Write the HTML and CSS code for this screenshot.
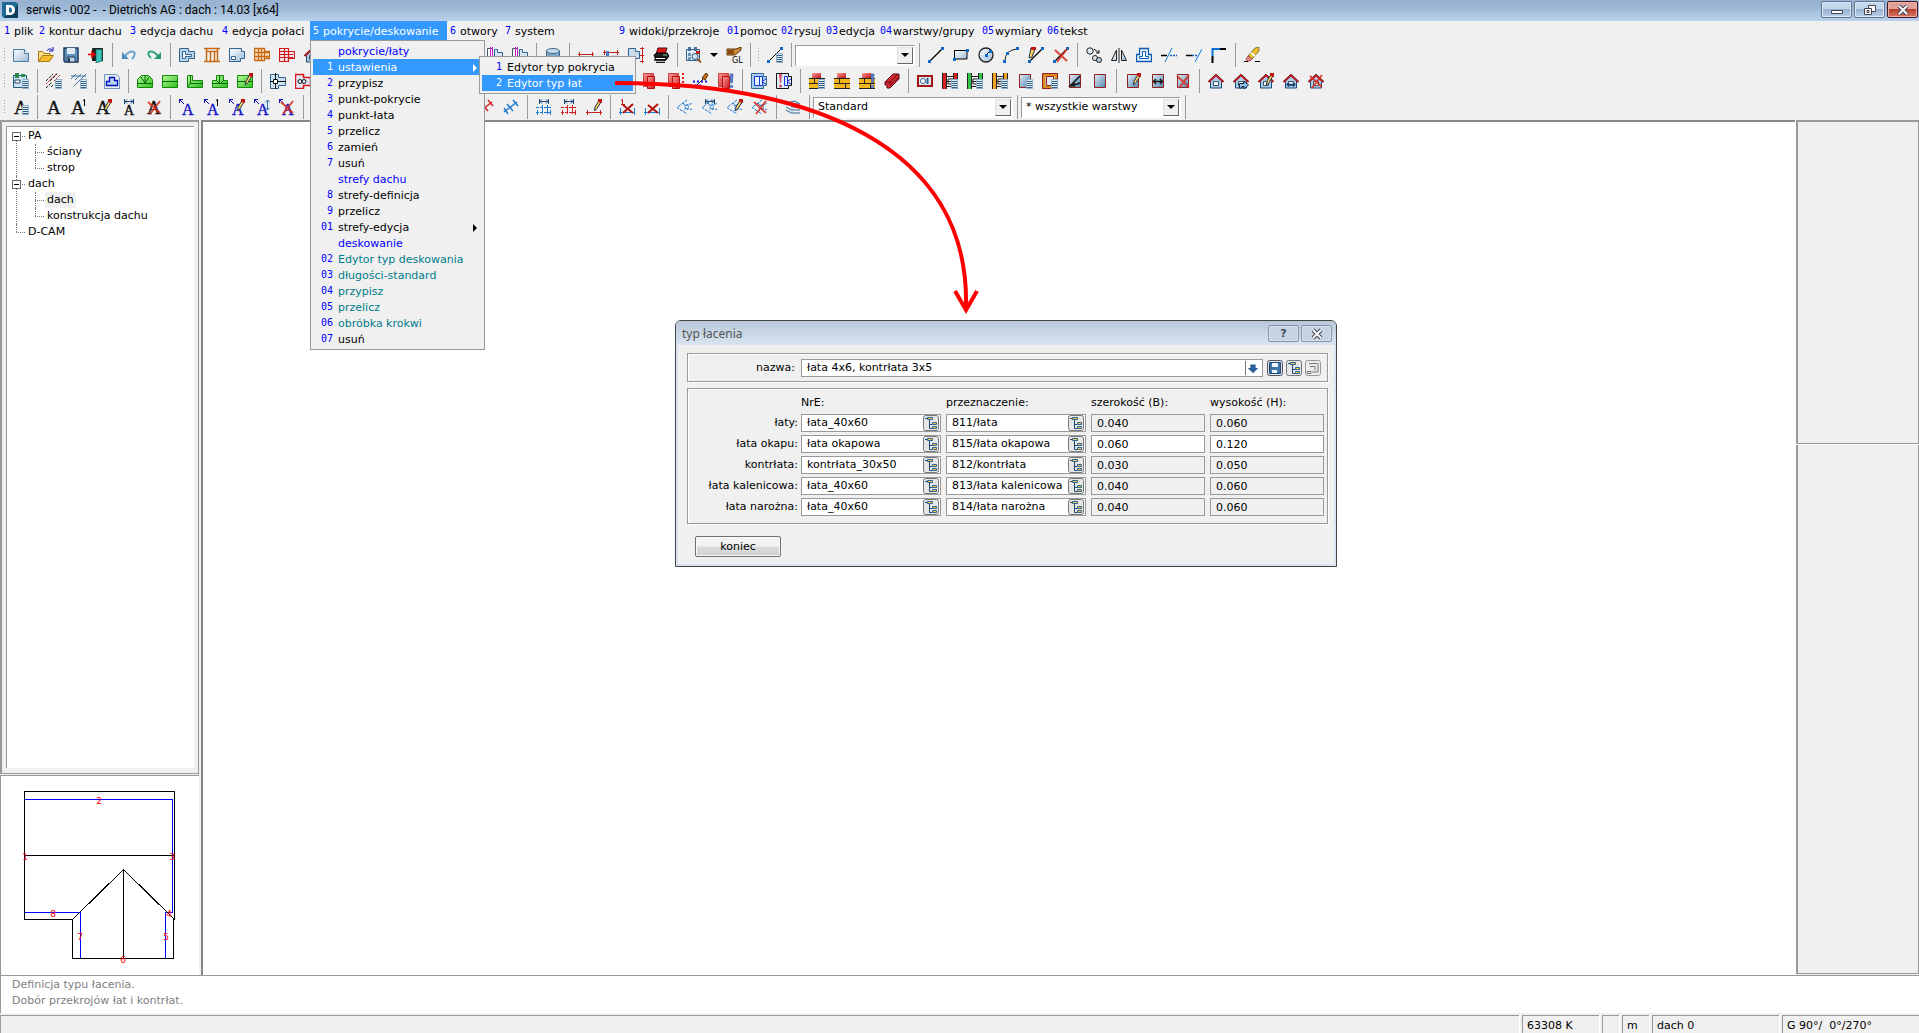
FILE: index.html
```
<!DOCTYPE html>
<html lang="pl">
<head>
<meta charset="utf-8">
<title>serwis - 002 - Dietrich's AG : dach : 14.03 [x64]</title>
<link rel="stylesheet" href="styles.css">
</head>
<body>
<svg class="sprite" aria-hidden="true">
<defs>
<linearGradient id="gb" x1="0" y1="0" x2="1" y2="1"><stop offset="0" stop-color="#fff"/><stop offset="1" stop-color="#9dbcd6"/></linearGradient>
<linearGradient id="gs" x1="0" y1="0" x2="1" y2="1"><stop offset="0" stop-color="#e4eef6"/><stop offset="1" stop-color="#4f86b0"/></linearGradient>
<linearGradient id="gg" x1="0" y1="0" x2="1" y2="1"><stop offset="0" stop-color="#b4f79a"/><stop offset="1" stop-color="#2fc01c"/></linearGradient>
<linearGradient id="gr" x1="0" y1="0" x2="1" y2="1"><stop offset="0" stop-color="#ff9c9c"/><stop offset="1" stop-color="#c01414"/></linearGradient>
</defs>
<!-- overlays shared by several tools -->
<symbol id="list" viewBox="0 0 16 16"><path fill="#e4eef6" stroke="#8fb0c8" d="M9.500 6.500h6v9h-6z"/><path stroke="#2f5f88" d="M10 8.500h5M10 10.500h5M10 12.500h5M10 14.500h5"/></symbol>
<symbol id="pen" viewBox="0 0 16 16"><path d="M13 1.500L9 8l-.5 4L11 9.500l4-6.500z" fill="#ffd75a" stroke="#1c3050"/><path d="M12 0h4v4l-4-1z" fill="#c01414"/></symbol>
<symbol id="cross" viewBox="0 0 16 16"><path d="M2 3l12 11M14 2L4 15" stroke="#d8291c" stroke-width="2" opacity=".85" fill="none"/></symbol>
<symbol id="one" viewBox="0 0 16 16"><path d="M12 1.500l1.500-1V7" stroke="#000" fill="none"/></symbol>
<symbol id="wide" viewBox="0 0 16 16"><path d="M3.500 0v5M12.500 0v5M4 2.500h8M6 .500l-2 2 2 2M10 .500l2 2-2 2" stroke="#1c4a78" fill="none"/></symbol>
<symbol id="tall" viewBox="0 0 16 16"><path d="M13.500 1v10M11 3.500L13.500 1 16 3.500M11 8.500l2.500 2.500L16 8.500" stroke="#2a6fae" fill="none"/></symbol>
<symbol id="bang" viewBox="0 0 16 16"><path d="M12 1h3l-.7 9h-1.600z" fill="#5b7fd0" stroke="#3550a0" stroke-width=".6"/><circle cx="13.500" cy="13.500" r="1.700" fill="#5b7fd0"/></symbol>
<!-- file -->
<symbol id="new" viewBox="0 0 16 16"><path d="M.5 2.500h11l4 4v8H.5z" fill="url(#gb)" stroke="#4a7ba3"/><path d="M11.500 2.500v4h4" fill="#fff" stroke="#4a7ba3"/></symbol>
<symbol id="open" viewBox="0 0 16 16"><path d="M.5 14.500v-10h4l1.500 2h6v3" fill="#ffe08a" stroke="#a87a10"/><path d="M.5 14.500l4-6h11l-4 6z" fill="#f7bd2f" stroke="#a87a10"/><path d="M9 3.500Q11 .5 14 2.500M15 0v4h-4" fill="none" stroke="#1010c0"/></symbol>
<symbol id="save" viewBox="0 0 16 16"><path d="M1 1h14v14H2l-1-1z" fill="#5f93bf" stroke="#1e3c5c" stroke-width="1.500"/><path d="M4 1h8v6H4z" fill="#dfeaf4"/><path d="M4 10h8v5H4z" fill="#c2d3e2" stroke="#1e3c5c"/><path d="M5 11h2v4H5z" fill="#1e3c5c"/></symbol>
<symbol id="exit" viewBox="0 0 16 16"><path d="M4.500 14V1.500h10V14" fill="#222" stroke="#222"/><path d="M8 2.500h6V14l-6 2z" fill="#3cc4ba" stroke="#0a5a58" stroke-width=".7"/><path d="M0 7.500h6M4 5l3 2.500L4 10z" fill="#d00" stroke="#d00" stroke-width="1.500"/></symbol>
<symbol id="undo" viewBox="0 0 16 16"><path d="M4 9Q9 3 13 5q2 3-2 7" fill="none" stroke="#6ba5d0" stroke-width="2"/><path d="M1 5v7h7z" fill="#4a8ec4"/></symbol>
<symbol id="redo" viewBox="0 0 16 16"><path d="M12 9Q7 3 3 5q-2 3 2 6" fill="none" stroke="#2fa383" stroke-width="2"/><path d="M15 5v7H8z" fill="#1f9a76"/></symbol>
<!-- building -->
<symbol id="plan" viewBox="0 0 16 16"><path d="M.5 1.500h9v3h6v7h-6v3h-9z" fill="#b9d3e8" stroke="#2f6390"/><path d="M3.500 4.500h3v3h6v2h-6v2h-3z" fill="#f4f8fb" stroke="#2f6390"/></symbol>
<symbol id="posts" viewBox="0 0 16 16"><path d="M0 1.500h16M0 14.500h16M2.500 1v14M6.500 4v11M10.500 4v11M13.500 1v14M2 4.500h12" stroke="#c86a14" stroke-width="1.500" fill="none"/></symbol>
<symbol id="room" viewBox="0 0 16 16"><path d="M.5 1.500h12v3h3v7h-4v3H.5z" fill="url(#gb)" stroke="#2f6390"/><path d="M2.500 9.500h4v3h-4z" fill="#fff" stroke="#2f6390"/></symbol>
<symbol id="beams" viewBox="0 0 16 16"><path d="M.5 1.500h10v12H.5zM10.500 4.500h5v7h-5zM0 5.500h16M0 9.500h16M4.500 1v13M7.500 1v13" stroke="#c86a14" stroke-width="1.300" fill="#f7e2c8"/></symbol>
<symbol id="beamsr" viewBox="0 0 16 16"><path d="M.5 1.500h9v13h-9zM9.500 4.500h6v7h-6zM0 4.500h10M0 7.500h14M0 10.500h14M5.500 1v13" stroke="#d01818" stroke-width="1.200" fill="#f0e4f0"/></symbol>
<symbol id="house" viewBox="0 0 16 16"><path d="M2.500 8v7h11V8L8 3z" fill="#a9cce6" stroke="#1c4a78"/><path d="M5.500 8.500h5v4h-5z" fill="#f0f4f8" stroke="#456"/><path d="M.5 9L8 2l7.500 7" fill="none" stroke="#d8141c" stroke-width="2"/><path d="M0 9l8-8 8 8" fill="none" stroke="#333" stroke-width=".7"/></symbol>
<symbol id="harr" viewBox="0 0 16 16"><path d="M6.500 15v-4.500H11V8l4.500 4-4.500 4v-2.500H9V15z" fill="#8fc4f0" stroke="#102a44"/></symbol>
<symbol id="hlr" viewBox="0 0 16 16"><path d="M4 11.500h8M6 9.500l-2 2 2 2M10 9.500l2 2-2 2" stroke="#1c4a78" stroke-width="1.300" fill="none"/></symbol>
<symbol id="wallm" viewBox="0 0 16 16"><path d="M.5 1.500h5v13h-5z" fill="#fff" stroke="#456"/><path d="M3.500 0v16M5.500 0v16" stroke="#c818c8"/><path d="M7.500 2.500h3v3h5v8h-8z" fill="#d6e5f1" stroke="#2f6390"/></symbol>
<symbol id="cyl" viewBox="0 0 16 16"><path d="M1.500 4v9q6.500 4 13 0V4" fill="#7fa9cb" stroke="#43698c"/><ellipse cx="8" cy="4" rx="6.500" ry="2.500" fill="#c4dbec" stroke="#43698c"/></symbol>
<symbol id="dim" viewBox="0 0 16 16"><path d="M0 5.500h16M1.500 3v5M14.500 3v5" stroke="#c02020" fill="none"/></symbol>
<symbol id="dim2" viewBox="0 0 16 16"><path d="M0 3.500h16M1.500 1v5M14.500 1v5" stroke="#c02020" fill="none"/><path d="M3 2h3v12H3z" fill="#4a78c0"/><path d="M9 6h6v9H9z" fill="#c9dcec"/></symbol>
<symbol id="dim3" viewBox="0 0 16 16"><path d="M.5 1.500h7v3h4v7H.5z" fill="#c9dcec" stroke="#2f6390"/><path d="M14.500 0v16M12 1.500h4M12 8.500h4M12 14.500h4" stroke="#c02020"/></symbol>
<symbol id="print" viewBox="0 0 16 16"><path d="M5 1h9l-2 6H3z" fill="#e01818" stroke="#501010"/><path d="M1 8l3-2h10l2 3-3 4H3z" fill="#222" stroke="#000"/><path d="M2 10h11M1 13h12M3 15.500h9" stroke="#111" stroke-width="1.500"/><path d="M3 11.500h9" stroke="#fff"/><path d="M10 8h4" stroke="#8c8"/></symbol>
<symbol id="find" viewBox="0 0 16 16"><path d="M.5 2.500h13v11H.5z" fill="#dfeaf4" stroke="#2f6390"/><path d="M2 0h3v4H2zM8 0h3v4H8z" fill="#456f98"/><path d="M2 6h3v3H2zM2 10h3v3H2z" fill="#6c95b8"/><path d="M10 4h4v3h-4z" fill="#c02020"/><circle cx="9" cy="9.500" r="3" fill="#cfe3f4" stroke="#33587c"/><path d="M11.500 12L15 15.500" stroke="#a85818" stroke-width="2"/></symbol>
<symbol id="gl" viewBox="0 0 16 16"><path d="M1 2h9l5-2v3L9 8H1z" fill="#d08a3a" stroke="#5a3208"/><path d="M2 3h6v4H2z" fill="#8a4c10"/></symbol>
<!-- drawing -->
<symbol id="line" viewBox="0 0 16 16"><path d="M2 14L14 2" stroke="#000" stroke-width="1.300"/><path d="M0 13h3v3H0zM13 0h3v3h-3z" fill="#0a6cc8"/></symbol>
<symbol id="rect" viewBox="0 0 16 16"><path d="M1.500 3.500h12.500v8.500H1.500z" fill="url(#gb)" stroke="#000"/><path d="M0 11h3v3H0zM13 2h3v3h-3z" fill="#0a6cc8"/></symbol>
<symbol id="circ" viewBox="0 0 16 16"><circle cx="8" cy="8" r="7" fill="url(#gb)" stroke="#222" stroke-width="1.300"/><path d="M8 8l4-4" stroke="#222"/><path d="M7 7h3v3H7zM11 3h3v3h-3z" fill="#0a6cc8"/></symbol>
<symbol id="arc" viewBox="0 0 16 16"><path d="M2 14Q2 3 14 2" stroke="#222" fill="none"/><path d="M0 13h3v3H0zM3 5h3v3H3zM13 0h3v3h-3z" fill="#0a6cc8"/></symbol>
<symbol id="penl" viewBox="0 0 16 16"><path d="M2 14L14 2" stroke="#000" stroke-width="1.300"/><path d="M3 1l4 1-3 8-3 1z" fill="#ffd75a" stroke="#1c3050"/><path d="M3 0h5v3H3z" fill="#c01414"/><path d="M0 13h3v3H0zM13 0h3v3h-3z" fill="#0a6cc8"/></symbol>
<symbol id="copy" viewBox="0 0 16 16"><circle cx="4" cy="4" r="3.200" fill="#dfeaf4" stroke="#222"/><circle cx="9" cy="11" r="2.500" fill="#dfeaf4" stroke="#222"/><circle cx="13" cy="13" r="2.500" fill="#b9d3e8" stroke="#222"/><path d="M8 2l5 4M13 3v3h-3" stroke="#111" fill="none"/></symbol>
<symbol id="mirror" viewBox="0 0 16 16"><path d="M8 1v15" stroke="#222"/><path d="M5.500 3v10.500h-5zM10.500 3v10.500h5z" fill="url(#gb)" stroke="#222"/></symbol>
<symbol id="offset" viewBox="0 0 16 16"><path d="M3.500 1.500h9v6h3v7H.5v-7h3z" fill="#e6f2fc" stroke="#0a5cb8" stroke-width="1.300"/><path d="M6.500 4.500h3v5h3v2h-9v-2h3z" fill="#fff" stroke="#0a5cb8"/></symbol>
<symbol id="trim" viewBox="0 0 16 16"><path d="M0 8.500h6" stroke="#000" stroke-width="1.500"/><path d="M4 15l7-14" stroke="#0a7ad8"/><path d="M9 8.500h7" stroke="#0a5cb8" stroke-width="1.500" stroke-dasharray="2 1"/></symbol>
<symbol id="extend" viewBox="0 0 16 16"><path d="M0 8.500h6" stroke="#000" stroke-width="1.500"/><path d="M9 15l7-13" stroke="#0a7ad8"/><path d="M6 8.500h6" stroke="#0a5cb8" stroke-width="1.500" stroke-dasharray="2 1"/></symbol>
<symbol id="corner" viewBox="0 0 16 16"><path d="M1.500 9V2H9" fill="none" stroke="#0a6cd8" stroke-width="2"/><path d="M9 2h6M1.500 9v7" stroke="#000" stroke-width="2"/></symbol>
<symbol id="erase" viewBox="0 0 16 16"><path d="M11 1l4-1v4L8 12l-4-3z" fill="#e8c030" stroke="#5a5010" stroke-width=".7"/><path d="M4 9l4 3-2 2H3l-1-2z" fill="#e88" stroke="#833" stroke-width=".7"/><path d="M7 6l4 3" stroke="#fff" stroke-width="2"/><path d="M0 14.500h4M11 14.500h5" stroke="#000"/></symbol>
<symbol id="drawset" viewBox="0 0 16 16"><path d="M2 14L14 2" stroke="#000"/><path d="M0 13h3v3H0zM13 0h3v3h-3z" fill="#0a6cc8"/></symbol>
<!-- roof -->
<symbol id="paste" viewBox="0 0 16 16"><path d="M.5 2.500h13v12H.5z" fill="#cfe3f0" stroke="#1c5a78"/><path d="M2 0h4v5H2zM8 1h4v3H8z" fill="#2a8a4a"/><path d="M2 7h5v3H2z" fill="#fff" stroke="#246"/></symbol>
<symbol id="hatch" viewBox="0 0 16 16"><path d="M0 8l7-7M4 8l7-7M0 15l6-6M5 14l3-3" stroke="#222" stroke-dasharray="3 1"/><path d="M0 11L11 0M8 8l6-6" stroke="#d01818" stroke-dasharray="2 1"/></symbol>
<symbol id="hatchb" viewBox="0 0 16 16"><path d="M0 6l5-5M4 7l6-6M8 8l7-7M3 13l5-5M0 3h15" stroke="#3f74a8"/></symbol>
<symbol id="base" viewBox="0 0 16 16"><path d="M.5 1.500h12l3 3v11H.5z" fill="#e4eef6" stroke="#6c95b8"/><path d="M5.500 4.500h5v3h3v5h-11v-4h3z" fill="#b4d4f0" stroke="#0a0ac0" stroke-width="1.300"/></symbol>
<symbol id="g1" viewBox="0 0 16 16"><path d="M.5 6.500l4-4h7l4 4v8H.5z" fill="url(#gg)" stroke="#138a0a"/><path d="M8 2v8M4 4l4 6 4-6M0 10.500h16" stroke="#0c6a06" fill="none"/></symbol>
<symbol id="g2" viewBox="0 0 16 16"><path d="M.5 2.500h15v12H.5z" fill="url(#gg)" stroke="#138a0a"/><path d="M0 8.500h16" stroke="#0c6a06"/></symbol>
<symbol id="g3" viewBox="0 0 16 16"><path d="M.5 2.500h5v5h10v7H.5z" fill="url(#gg)" stroke="#138a0a"/><path d="M3.500 2v8l-3 4M3 10.500h13" stroke="#0c6a06" fill="none"/></symbol>
<symbol id="g4" viewBox="0 0 16 16"><path d="M4.500 2.500h7v5h4v7H.5v-7h4z" fill="url(#gg)" stroke="#138a0a"/><path d="M7.500 2v8M4 7l4 4 4-4M0 10.500h16" stroke="#0c6a06" fill="none"/></symbol>
<symbol id="join" viewBox="0 0 16 16"><path d="M.5 1.500h8v3h7v8h-7v3h-8z" fill="#cfe3f4" stroke="#2f6390"/><path d="M0 8.500h16M5.500 0v16" stroke="#111"/><path d="M3.500 6.500h4v4h-4z" fill="#fff" stroke="#111"/></symbol>
<symbol id="joinr" viewBox="0 0 16 16"><path d="M.5 1.500h8v3h7v8h-7v3h-8z" fill="#dfeaf4" stroke="#d8141c" stroke-width="1.500"/><circle cx="5" cy="8.500" r="2" fill="none" stroke="#111"/><circle cx="9" cy="8.500" r="2" fill="none" stroke="#111"/></symbol>
<symbol id="rbox" viewBox="0 0 16 16"><path d="M.5 .5h10v13H.5z" fill="url(#gr)" stroke="#c84040"/><path d="M4.500 3.500h7v12h-7z" fill="url(#gr)" stroke="#b01010"/></symbol>
<symbol id="rdots" viewBox="0 0 16 16"><path d="M15 0v14" stroke="#e01818" stroke-width="2" stroke-dasharray="2 2"/></symbol>
<symbol id="brush" viewBox="0 0 16 16"><path d="M0 8.500h14M2 12.500h6" stroke="#1818d8" stroke-width="2" stroke-dasharray="2 2"/><path d="M1 15l9-9" stroke="#333"/><path d="M9 5l4-5 2 2-3 5z" fill="#c86a14" stroke="#5a2c04"/></symbol>
<symbol id="joinb" viewBox="0 0 16 16"><path d="M.5 .5h12v3h3v9h-3v3H.5z" fill="#a9cdf0" stroke="#2f6390"/><path d="M3.500 3.500h5v9h-5zM8.500 3.500h3v9h-3M15 6l-4 2.500 4 2.500" fill="#e4f0fc" stroke="#1434e0"/></symbol>
<symbol id="joink" viewBox="0 0 16 16"><path d="M.5 .5h12v3h3v9h-3v3H.5z" fill="#dfeaf4" stroke="#111"/><path d="M8.500 3.500h3v9h-3zM15 6l-4 2.500 4 2.500" fill="none" stroke="#1434e0"/><path d="M3 1h3L5 10H4z" fill="#d85060"/><circle cx="4.500" cy="13" r="1.500" fill="#d85060"/></symbol>
<symbol id="brick" viewBox="0 0 16 16"><path d="M0 6h16v9H0z" fill="#f2b61c"/><path d="M0 5.500h16M0 10.500h16M0 15.500h16M5.500 6v5M11.500 10v5" stroke="#222"/><path d="M3 0h9v5H3z" fill="url(#gr)"/></symbol>
<symbol id="bar" viewBox="0 0 16 16"><path d="M1 9l8-8h6v5l-9 9H3V12H1z" fill="#d82832" stroke="#600a10"/><path d="M1 9h5l8-8M6 9v3l9-8" stroke="#600a10" fill="none"/></symbol>
<symbol id="cam" viewBox="0 0 16 16"><path d="M1 3h14v10H1z" fill="#dfeaf4" stroke="#a01414" stroke-width="2"/><circle cx="6" cy="8" r="2.500" fill="#fff" stroke="#2f6390"/><path d="M10.500 5v6" stroke="#2f6390" stroke-width="2"/></symbol>
<symbol id="lad" viewBox="0 0 16 16"><path d="M2.500 0v16M13.500 0v16" stroke="currentColor" stroke-width="4"/><path d="M.5 0v16M4.500 0v16M11.500 0v16M15.500 0v16M4 3.500h8M4 8.500h8M4 13.500h8M6 6h5v5H6z" stroke="#222" fill="none"/></symbol>
<symbol id="win" viewBox="0 0 16 16"><path d="M2.500 1.500h11v13h-11z" fill="url(#gs)" stroke="#902020"/></symbol>
<symbol id="wino" viewBox="0 0 16 16"><path d="M2 1.500h12v13H2z" fill="#dfeaf4" stroke="#d88a1c" stroke-width="3"/><path d="M.5 .5h15v15H.5zM4.500 3.500h7v9h-7z" stroke="#902020" fill="none"/></symbol>
<symbol id="diag" viewBox="0 0 16 16"><path d="M2 14L13 3M7 14V9M4 13l9-3" stroke="#111" stroke-width="1.500"/></symbol>
<symbol id="lr" viewBox="0 0 16 16"><path d="M4 8.500h8M6 6l-2.500 2.500L6 11M10 6l2.500 2.500L10 11" stroke="#111" stroke-width="1.300" fill="none"/></symbol>
<!-- text and dimensions -->
<symbol id="tip" viewBox="0 0 16 16"><path d="M0 .5h4M.5 0v4M1 1l4 4" stroke="#1010c8" fill="none"/></symbol>
<symbol id="ch" viewBox="0 0 16 16"><path d="M0 8.500h16M0 13.500h16" stroke="currentColor" fill="none" stroke-dasharray="3 1"/><path d="M1.500 11v5M6.500 6v9M11.500 6v9M14.500 11v5" stroke="currentColor" fill="none"/></symbol>
<symbol id="slope" viewBox="0 0 16 16"><path d="M1 13L14 3M1 9l4 6M10 1l5 6M4 5l6 7" stroke="currentColor" stroke-width="1.500" fill="none"/></symbol>
<symbol id="chb" viewBox="0 0 16 16"><path d="M0 13.500h16M1.500 9v7M15.500 9v7" stroke="#1c7ad0" fill="none"/></symbol>
<symbol id="oner" viewBox="0 0 16 16"><path d="M2 1.500l1.500-1v5M2 5.500h4" stroke="#c01414" fill="none"/></symbol>
<symbol id="crossr" viewBox="0 0 16 16"><path d="M4 6l10 8M14 5L4 14" stroke="#b01414" stroke-width="2" fill="none"/></symbol>
<symbol id="eye" viewBox="0 0 16 16"><path d="M10 1L0 8.500l10 6.500M6 4q4 4 1 8M10 5q3 3 0 6M8 6.500l7-2M9 9.500l6 1" stroke="#1c7ad0" fill="none" stroke-dasharray="3 1"/></symbol>
<symbol id="layers" viewBox="0 0 16 16"><path d="M1 4l9-2 5 3H6zM1 8l5 3h9M1 11l5 3h9M6 8h9" fill="#cfe0ee" stroke="#3f6a90"/></symbol>
<!-- dialog -->
<symbol id="tree" viewBox="0 0 16 16"><rect x=".5" y=".5" width="15" height="15" rx="2" fill="#e6e6e6" stroke="#777"/><path d="M2 3.500h3M6.500 5v8.500H9M6.500 9.500H9" stroke="#1c4a78" fill="none"/><path d="M4.500 2.500h5v2h-5zM9.500 7.500h4v2h-4zM9.500 11.500h4v2h-4z" fill="#f7c948" stroke="#2f6390"/></symbol>
<symbol id="dsave" viewBox="0 0 16 16"><rect x=".5" y=".5" width="15" height="15" rx="2" fill="#e6e6e6" stroke="#556"/><path d="M2.500 2.500h11v11h-11z" fill="#3f74a8" stroke="#1c4a78"/><path d="M5 3h6v4H5zM5 10h5v3H5z" fill="#eef4f9"/></symbol>
<symbol id="dlink" viewBox="0 0 16 16"><rect x=".5" y=".5" width="15" height="15" rx="2" fill="#ececec" stroke="#999"/><path d="M4 3.500h8M5 6.500h5v4M13 3v9H7M2 11.500h4v2H2z" fill="none" stroke="#777"/></symbol>
<symbol id="down" viewBox="0 0 16 16"><path d="M5 4h6v4h3l-6 6-6-6h3z" fill="#2a6099"/></symbol>
</svg>

<header class="titlebar">
  <svg class="logo" viewBox="0 0 16 16" aria-hidden="true"><path d="M0 0h14l2 2v14H2l-2-2z" fill="#1f6a94"/><path d="M2 16h14V3z" fill="#0f3f5c"/><path d="M4 3h5q4 1 4 5t-4 5H4zM7 5.500v5h1.500q1.500-.5 1.500-2.500T8.500 5.500z" fill="#fff" fill-rule="evenodd"/></svg>
  <h1>serwis - 002 - &nbsp;- Dietrich's AG : dach : 14.03 [x64]</h1>
  <div class="winbtns">
    <button class="wbtn" aria-label="Minimalizuj"><svg viewBox="0 0 12 12"><path d="M.5 6.500h11v3H.5z" fill="#fff" stroke="#445"/></svg></button>
    <button class="wbtn" aria-label="Przywróć"><svg viewBox="0 0 12 12"><path d="M4.500 1.500h7v6h-7z" fill="#fff" stroke="#445"/><path d="M.5 4.500h7v6h-7z" fill="#fff" stroke="#445"/><path d="M3 6.500h2v2H3z" fill="none" stroke="#445"/></svg></button>
    <button class="wbtn close" aria-label="Zamknij"><svg viewBox="0 0 12 12"><path d="M2 2l8 8M10 2l-8 8" stroke="#445" stroke-width="4"/><path d="M2 2l8 8M10 2l-8 8" stroke="#fff" stroke-width="2"/></svg></button>
  </div>
</header>

<nav class="menubar">
  <button class="mi"><b>1</b>plik</button>
  <button class="mi"><b>2</b>kontur dachu</button>
  <button class="mi"><b>3</b>edycja dachu</button>
  <button class="mi"><b>4</b>edycja połaci</button>
  <div class="anchor">
    <button class="mi open"><b>5</b>pokrycie/deskowanie</button>
    <ul class="menu">
      <li class="head">pokrycie/łaty</li>
      <li class="anchor"><button class="row on"><b>1</b>ustawienia<i class="more"></i></button>
        <ul class="menu sub">
          <li><button class="row"><b>1</b>Edytor typ pokrycia</button></li>
          <li><button class="row on"><b>2</b>Edytor typ łat</button></li>
        </ul>
      </li>
      <li><button class="row"><b>2</b>przypisz</button></li>
      <li><button class="row"><b>3</b>punkt-pokrycie</button></li>
      <li><button class="row"><b>4</b>punkt-łata</button></li>
      <li><button class="row"><b>5</b>przelicz</button></li>
      <li><button class="row"><b>6</b>zamień</button></li>
      <li><button class="row"><b>7</b>usuń</button></li>
      <li class="head">strefy dachu</li>
      <li><button class="row"><b>8</b>strefy-definicja</button></li>
      <li><button class="row"><b>9</b>przelicz</button></li>
      <li><button class="row"><b>01</b>strefy-edycja<i class="more"></i></button></li>
      <li class="head">deskowanie</li>
      <li><button class="row teal"><b>02</b>Edytor typ deskowania</button></li>
      <li><button class="row teal"><b>03</b>długości-standard</button></li>
      <li><button class="row teal"><b>04</b>przypisz</button></li>
      <li><button class="row teal"><b>05</b>przelicz</button></li>
      <li><button class="row teal"><b>06</b>obróbka krokwi</button></li>
      <li><button class="row"><b>07</b>usuń</button></li>
    </ul>
  </div>
  <button class="mi"><b>6</b>otwory</button>
  <button class="mi"><b>7</b>system</button>
  <button class="mi"><b>9</b>widoki/przekroje</button>
  <button class="mi two"><b>01</b>pomoc</button>
  <button class="mi two"><b>02</b>rysuj</button>
  <button class="mi two"><b>03</b>edycja</button>
  <button class="mi two"><b>04</b>warstwy/grupy</button>
  <button class="mi two"><b>05</b>wymiary</button>
  <button class="mi two"><b>06</b>tekst</button>
</nav>

<div class="toolbars">
  <div class="bar" role="toolbar" aria-label="Plik i rysowanie">
    <i class="grip"></i>
    <button class="t" aria-label="Nowy"><svg><use href="#new"/></svg></button>
    <button class="t" aria-label="Otwórz"><svg><use href="#open"/></svg></button>
    <button class="t" aria-label="Zapisz"><svg><use href="#save"/></svg></button>
    <button class="t" aria-label="Wyjście"><svg><use href="#exit"/></svg></button>
    <i class="sep"></i>
    <button class="t" aria-label="Cofnij"><svg><use href="#undo"/></svg></button>
    <button class="t" aria-label="Ponów"><svg><use href="#redo"/></svg></button>
    <i class="sep"></i>
    <button class="t" aria-label="Obrys"><svg><use href="#plan"/></svg></button>
    <button class="t" aria-label="Ściany"><svg><use href="#posts"/></svg></button>
    <button class="t" aria-label="Pomieszczenie"><svg><use href="#room"/></svg></button>
    <button class="t" aria-label="Strop"><svg><use href="#beams"/></svg></button>
    <button class="t" aria-label="Belki"><svg><use href="#beamsr"/></svg></button>
    <button class="t" aria-label="Dach"><svg><use href="#house"/></svg></button>
    <i class="gap1"></i>
    <button class="t" aria-label="Ściana 1"><svg><use href="#wallm"/></svg></button>
    <button class="t" aria-label="Ściana 2"><svg><use href="#wallm"/></svg></button>
    <i class="sep"></i>
    <button class="t" aria-label="Baza"><svg><use href="#cyl"/></svg></button>
    <i class="sep"></i>
    <button class="t" aria-label="Wymiar"><svg><use href="#dim" y="2"/></svg></button>
    <button class="t" aria-label="Wymiar ściany"><svg><use href="#dim2" y="2"/></svg></button>
    <button class="t" aria-label="Wymiar pionowy"><svg><use href="#dim3"/></svg></button>
    <button class="t" aria-label="Drukuj"><svg><use href="#print"/></svg></button>
    <i class="sep"></i>
    <button class="t" aria-label="Podgląd"><svg><use href="#find"/></svg></button>
    <button class="t narrow" aria-label="Więcej"><i class="tri"></i></button>
    <button class="t" aria-label="OpenGL"><svg><use href="#gl"/><text x="6" y="16" class="gl">GL</text></svg></button>
    <i class="sep"></i>
    <i class="grip"></i>
    <button class="t" aria-label="Ustawienia rysunku"><svg><use href="#drawset"/><use href="#list"/></svg></button>
    <i class="sep"></i>
    <span class="combo w120"><select aria-label="Styl linii"><option></option></select><i class="arrow"><i class="tri"></i></i></span>
    <i class="sep"></i>
    <button class="t" aria-label="Linia"><svg><use href="#line"/></svg></button>
    <button class="t" aria-label="Prostokąt"><svg><use href="#rect"/></svg></button>
    <button class="t" aria-label="Okrąg"><svg><use href="#circ"/></svg></button>
    <button class="t" aria-label="Łuk"><svg><use href="#arc"/></svg></button>
    <button class="t" aria-label="Edytuj linię"><svg><use href="#penl"/></svg></button>
    <button class="t" aria-label="Usuń linię"><svg><use href="#line"/><use href="#cross"/></svg></button>
    <i class="sep"></i>
    <button class="t" aria-label="Kopiuj"><svg><use href="#copy"/></svg></button>
    <button class="t" aria-label="Lustro"><svg><use href="#mirror"/></svg></button>
    <button class="t" aria-label="Odsuń"><svg><use href="#offset"/></svg></button>
    <button class="t" aria-label="Utnij"><svg><use href="#trim"/></svg></button>
    <button class="t" aria-label="Wydłuż"><svg><use href="#extend"/></svg></button>
    <button class="t" aria-label="Narożnik"><svg><use href="#corner"/></svg></button>
    <i class="sep"></i>
    <button class="t" aria-label="Gumka"><svg><use href="#erase"/></svg></button>
  </div>
  <div class="bar" role="toolbar" aria-label="Dach">
    <i class="grip"></i>
    <button class="t" aria-label="Wklej"><svg><use href="#paste"/><use href="#list"/></svg></button>
    <i class="sep"></i>
    <button class="t" aria-label="Kreskowanie"><svg><use href="#hatch"/><use href="#list"/></svg></button>
    <button class="t" aria-label="Kreskowanie 2"><svg><use href="#hatchb"/><use href="#list"/></svg></button>
    <i class="sep"></i>
    <button class="t" aria-label="Podstawa"><svg><use href="#base"/></svg></button>
    <i class="sep"></i>
    <button class="t" aria-label="Dach czterospadowy"><svg><use href="#g1"/></svg></button>
    <button class="t" aria-label="Dach dwuspadowy"><svg><use href="#g2"/></svg></button>
    <button class="t" aria-label="Dach kątowy"><svg><use href="#g3"/></svg></button>
    <button class="t" aria-label="Dach złożony"><svg><use href="#g4"/></svg></button>
    <button class="t" aria-label="Edycja dachu"><svg><use href="#g2"/><use href="#pen"/></svg></button>
    <i class="sep"></i>
    <button class="t" aria-label="Połącz"><svg><use href="#join"/></svg></button>
    <button class="t" aria-label="Grupuj"><svg><use href="#joinr"/></svg></button>
    <i class="gap2"></i>
    <button class="t" aria-label="Pokrycie"><svg><use href="#rbox"/></svg></button>
    <button class="t" aria-label="Pokrycie punktowe"><svg><use href="#rbox"/><use href="#rdots"/></svg></button>
    <button class="t" aria-label="Przypisz"><svg><use href="#brush"/></svg></button>
    <button class="t" aria-label="Sprawdź pokrycie"><svg><use href="#rbox"/><use href="#bang"/></svg></button>
    <i class="sep"></i>
    <button class="t" aria-label="Złącze"><svg><use href="#joinb"/></svg></button>
    <button class="t" aria-label="Sprawdź złącze"><svg><use href="#joink"/></svg></button>
    <i class="sep"></i>
    <button class="t" aria-label="Warstwy muru"><svg><use href="#brick"/><use href="#list"/></svg></button>
    <button class="t" aria-label="Mur"><svg><use href="#brick"/></svg></button>
    <button class="t" aria-label="Sprawdź mur"><svg><use href="#brick"/><use href="#bang"/></svg></button>
    <button class="t" aria-label="Belka"><svg><use href="#bar"/></svg></button>
    <i class="sep"></i>
    <button class="t" aria-label="Obrabiarka"><svg><use href="#cam"/></svg></button>
    <button class="t red" aria-label="Słupy"><svg><use href="#lad"/><use href="#list"/></svg></button>
    <button class="t green" aria-label="Rygle"><svg><use href="#lad"/><use href="#list"/></svg></button>
    <button class="t amber" aria-label="Nadproża"><svg><use href="#lad"/><use href="#list"/></svg></button>
    <button class="t" aria-label="Okno z listą"><svg><use href="#win"/><use href="#list"/></svg></button>
    <button class="t" aria-label="Rama"><svg><use href="#wino"/><use href="#list"/></svg></button>
    <button class="t" aria-label="Skos"><svg><use href="#win"/><use href="#diag"/></svg></button>
    <button class="t" aria-label="Okno"><svg><use href="#win"/></svg></button>
    <i class="sep"></i>
    <button class="t" aria-label="Edytuj okno"><svg><use href="#win"/><use href="#pen"/></svg></button>
    <button class="t" aria-label="Przesuń okno"><svg><use href="#win"/><use href="#lr"/></svg></button>
    <button class="t" aria-label="Usuń okno"><svg><use href="#win"/><use href="#cross"/></svg></button>
    <i class="sep"></i>
    <button class="t" aria-label="Lukarna"><svg><use href="#house"/></svg></button>
    <button class="t" aria-label="Wstaw lukarnę"><svg><use href="#house"/><use href="#harr"/></svg></button>
    <button class="t" aria-label="Edytuj lukarnę"><svg><use href="#house"/><use href="#pen"/></svg></button>
    <button class="t" aria-label="Przesuń lukarnę"><svg><use href="#house"/><use href="#hlr"/></svg></button>
    <button class="t" aria-label="Usuń lukarnę"><svg><use href="#house"/><use href="#cross"/></svg></button>
  </div>
  <div class="bar" role="toolbar" aria-label="Tekst i warstwy">
    <i class="grip"></i>
    <button class="t" aria-label="Ustawienia tekstu"><svg><text x="1" y="15" class="glyph">A</text><use href="#list"/></svg></button>
    <i class="sep"></i>
    <button class="t" aria-label="Tekst"><svg><text x="1" y="15" class="glyph">A</text></svg></button>
    <button class="t" aria-label="Tekst 1"><svg><text x="0" y="15" class="glyph">A</text><use href="#one"/></svg></button>
    <button class="t" aria-label="Edytuj tekst"><svg><text x="0" y="15" class="glyph">A</text><use href="#pen"/></svg></button>
    <button class="t" aria-label="Przesuń tekst"><svg><text x="3" y="16" class="glyph small">A</text><use href="#wide"/></svg></button>
    <button class="t" aria-label="Usuń tekst"><svg><text x="1" y="15" class="glyph">A</text><use href="#cross"/></svg></button>
    <i class="sep"></i>
    <button class="t" aria-label="Opis"><svg><use href="#tip"/><text x="3" y="16" class="glyph note">A</text></svg></button>
    <button class="t" aria-label="Opis 1"><svg><use href="#tip"/><text x="3" y="16" class="glyph note">A</text><use href="#one"/></svg></button>
    <button class="t" aria-label="Edytuj opis"><svg><use href="#tip"/><text x="3" y="16" class="glyph note">A</text><use href="#pen"/></svg></button>
    <button class="t" aria-label="Przesuń opis"><svg><use href="#tip"/><text x="3" y="16" class="glyph note">A</text><use href="#tall"/></svg></button>
    <button class="t" aria-label="Usuń opis"><svg><use href="#tip"/><text x="3" y="16" class="glyph note">A</text><use href="#cross"/></svg></button>
    <i class="sep"></i>
    <i class="gap3"></i>
    <button class="t red" aria-label="Spadek"><svg><use href="#slope"/></svg></button>
    <button class="t blue" aria-label="Spadek 2"><svg><use href="#slope"/></svg></button>
    <i class="sep"></i>
    <button class="t blue" aria-label="Przesuń łańcuch"><svg><use href="#wide"/><use href="#ch"/></svg></button>
    <button class="t red" aria-label="Przesuń łańcuch 2"><svg><use href="#wide"/><use href="#ch"/></svg></button>
    <button class="t red" aria-label="Edytuj łańcuch"><svg><use href="#dim" y="8"/><use href="#pen"/></svg></button>
    <i class="sep"></i>
    <button class="t" aria-label="Usuń wymiar"><svg><use href="#chb"/><use href="#oner"/><use href="#crossr"/></svg></button>
    <button class="t" aria-label="Usuń wymiary"><svg><use href="#chb"/><use href="#crossr"/></svg></button>
    <i class="sep"></i>
    <button class="t" aria-label="Widok"><svg><use href="#eye"/></svg></button>
    <button class="t" aria-label="Przesuń widok"><svg><use href="#eye"/><use href="#wide"/></svg></button>
    <button class="t" aria-label="Edytuj widok"><svg><use href="#eye"/><use href="#pen"/></svg></button>
    <button class="t" aria-label="Usuń widok"><svg><use href="#eye"/><use href="#cross"/></svg></button>
    <i class="sep"></i>
    <button class="t" aria-label="Warstwy"><svg><use href="#layers"/></svg></button>
    <i class="sep"></i>
    <span class="combo w200"><select aria-label="Warstwa"><option>Standard</option></select><i class="arrow"><i class="tri"></i></i></span>
    <i class="sep"></i>
    <span class="combo w160"><select aria-label="Filtr warstw"><option>* wszystkie warstwy</option></select><i class="arrow"><i class="tri"></i></i></span>
    <i class="sep"></i>
  </div>
</div>

<main class="work">
  <aside class="left">
    <div class="treeframe">
      <ul class="tree">
        <li><button class="tog" aria-label="Zwiń PA"></button><a href="#pa">PA</a>
          <ul><li><a href="#sciany">ściany</a></li><li><a href="#strop">strop</a></li></ul></li>
        <li><button class="tog" aria-label="Zwiń dach"></button><a href="#dach">dach</a>
          <ul><li><a href="#dach1" class="sel">dach</a></li><li><a href="#konstrukcja">konstrukcja dachu</a></li></ul></li>
        <li><a href="#dcam">D-CAM</a></li>
      </ul>
    </div>
    <div class="preview">
      <svg viewBox="0 0 198 198" aria-label="Rzut dachu">
        <g fill="none" stroke="#00f"><path d="M24 23.500h147.500v113h-7V182M24 136.500h55.500V182"/></g>
        <g fill="none" stroke="#000"><path d="M23.500 15.500h150v128h-1v39h-101v-39h-48zM23.500 79.500h150M122.500 93.500v89M72 143l50.500-49.500L173 143"/></g>
        <g class="nums"><text x="98" y="28">2</text><text x="24" y="84">1</text><text x="171" y="84">3</text><text x="168" y="141">4</text><text x="165" y="164">5</text><text x="122" y="187">6</text><text x="79" y="164">7</text><text x="52" y="141">8</text></g>
      </svg>
    </div>
  </aside>
  <section class="canvas" aria-label="Rysunek"></section>
  <aside class="right"><div class="upper"></div><div class="lower"></div></aside>
</main>

<section class="messages">
  <p>Definicja typu łacenia.</p>
  <p>Dobór przekrojów łat i kontrłat.</p>
</section>

<footer class="status">
  <span class="c0"></span><span class="c1">63308 K</span><span class="c2"></span><span class="c3">m</span><span class="c4">dach 0</span><span class="c5">G 90°/&nbsp; 0°/270°</span>
</footer>

<form class="dialog" aria-label="typ łacenia">
  <div class="dtitle"><h2>typ łacenia</h2>
    <button type="button" class="wbtn pale" aria-label="Pomoc">?</button>
    <button type="button" class="wbtn pale" aria-label="Zamknij okno"><svg viewBox="0 0 12 12"><path d="M2 2l8 8M10 2l-8 8" stroke="#445" stroke-width="4"/><path d="M2 2l8 8M10 2l-8 8" stroke="#fff" stroke-width="2"/></svg></button>
  </div>
  <div class="dbody">
    <div class="group name">
      <label for="nazwa">nazwa:</label>
      <div class="field wide"><input id="nazwa" value="łata 4x6, kontrłata 3x5"><button type="button" class="drop" aria-label="Lista"><svg><use href="#down"/></svg></button></div>
      <div class="acts">
        <button type="button" class="ib" aria-label="Zapisz typ"><svg><use href="#dsave"/></svg></button>
        <button type="button" class="ib" aria-label="Wybierz typ"><svg><use href="#tree"/></svg></button>
        <button type="button" class="ib" aria-label="Wstaw typ"><svg><use href="#dlink"/></svg></button>
      </div>
    </div>
    <div class="group grid">
      <span></span><span>NrE:</span><span>przeznaczenie:</span><span>szerokość (B):</span><span>wysokość (H):</span>
      <label for="n1">łaty:</label>
      <div class="field"><input id="n1" value="łata_40x60"><button type="button" class="ib" aria-label="Wybierz"><svg><use href="#tree"/></svg></button></div>
      <div class="field"><input aria-label="przeznaczenie łaty" value="811/łata"><button type="button" class="ib" aria-label="Wybierz"><svg><use href="#tree"/></svg></button></div>
      <input class="num" aria-label="szerokość łaty" value="0.040" readonly><input class="num" aria-label="wysokość łaty" value="0.060" readonly>
      <label for="n2">łata okapu:</label>
      <div class="field"><input id="n2" value="łata okapowa"><button type="button" class="ib" aria-label="Wybierz"><svg><use href="#tree"/></svg></button></div>
      <div class="field"><input aria-label="przeznaczenie łaty okapu" value="815/łata okapowa"><button type="button" class="ib" aria-label="Wybierz"><svg><use href="#tree"/></svg></button></div>
      <input class="num" aria-label="szerokość łaty okapu" value="0.060"><input class="num" aria-label="wysokość łaty okapu" value="0.120">
      <label for="n3">kontrłata:</label>
      <div class="field"><input id="n3" value="kontrłata_30x50"><button type="button" class="ib" aria-label="Wybierz"><svg><use href="#tree"/></svg></button></div>
      <div class="field"><input aria-label="przeznaczenie kontrłaty" value="812/kontrłata"><button type="button" class="ib" aria-label="Wybierz"><svg><use href="#tree"/></svg></button></div>
      <input class="num" aria-label="szerokość kontrłaty" value="0.030" readonly><input class="num" aria-label="wysokość kontrłaty" value="0.050" readonly>
      <label for="n4">łata kalenicowa:</label>
      <div class="field"><input id="n4" value="łata_40x60"><button type="button" class="ib" aria-label="Wybierz"><svg><use href="#tree"/></svg></button></div>
      <div class="field"><input aria-label="przeznaczenie łaty kalenicowej" value="813/łata kalenicowa"><button type="button" class="ib" aria-label="Wybierz"><svg><use href="#tree"/></svg></button></div>
      <input class="num" aria-label="szerokość łaty kalenicowej" value="0.040" readonly><input class="num" aria-label="wysokość łaty kalenicowej" value="0.060" readonly>
      <label for="n5">łata narożna:</label>
      <div class="field"><input id="n5" value="łata_40x60"><button type="button" class="ib" aria-label="Wybierz"><svg><use href="#tree"/></svg></button></div>
      <div class="field"><input aria-label="przeznaczenie łaty narożnej" value="814/łata narożna"><button type="button" class="ib" aria-label="Wybierz"><svg><use href="#tree"/></svg></button></div>
      <input class="num" aria-label="szerokość łaty narożnej" value="0.040" readonly><input class="num" aria-label="wysokość łaty narożnej" value="0.060" readonly>
    </div>
    <button type="button" class="done">koniec</button>
  </div>
</form>

<svg class="pointer" viewBox="0 0 370 240" aria-hidden="true"><path d="M0 6C195 6 355 68 351 230" fill="none" stroke="#f00" stroke-width="4"/><path d="M340 214l11 19 11-19" fill="none" stroke="#f00" stroke-width="4"/></svg>
</body>
</html>
```
FILE: styles.css
```
* { box-sizing: border-box; }
body {
  margin: 0; height: 100vh; overflow: hidden; position: relative;
  display: flex; flex-direction: column;
  background: #f0f0f0; color: #000;
  font: 11px/16px "DejaVu Sans", Verdana, sans-serif;
}
button, input, select { font: inherit; color: inherit; margin: 0; padding: 0; border: 0; background: none; border-radius: 0; }
ul { list-style: none; margin: 0; padding: 0; }
h1, h2, p { margin: 0; font-weight: normal; }
i, b { font-style: normal; font-weight: normal; }
a { color: inherit; text-decoration: none; }
.sprite { position: absolute; width: 0; height: 0; }

/* window title */
.titlebar { display: flex; align-items: center; flex: none; height: 21px; padding: 0 1px 2px 2px; background: linear-gradient(#98b2d0, #9ab5d3 30%, #bad2ec); }
.logo { width: 16px; height: 16px; margin-right: 8px; }
h1 { flex: 1; font: 12px/18px Roboto, sans-serif; }
.winbtns { display: flex; gap: 2px; }
.wbtn { display: flex; align-items: center; justify-content: center; width: 31px; height: 17px; border: 1px solid #5d7492; border-radius: 2px; background: linear-gradient(#c4d6ea 45%, #96b0ce 50%, #bcd2ea); box-shadow: inset 0 0 0 1px #dbe7f3; }
.wbtn svg { width: 12px; height: 12px; }
.wbtn.close { border-color: #4a1420; background: linear-gradient(#e0a298 45%, #b8402c 50%, #d87868); box-shadow: inset 0 0 0 1px #e8b4aa; }
.wbtn.pale { border-color: #8795ab; background: #c5d3e2; box-shadow: inset 0 0 0 1px #d5e0eb; color: #445; font-weight: bold; }

/* menu bar */
.menubar { display: grid; flex: none; grid-template-columns: 35px 91px 92px 91px 137px 55px 113px 112px 54px 45px 54px 102px 65px auto; height: 19px; padding-left: 1px; }
.anchor { position: relative; }
.mi { display: flex; align-items: center; width: 100%; height: 19px; padding: 2px 0 0 3px; white-space: nowrap; }
.mi b, .row b { flex: none; font: 10px/10px "DejaVu Sans Mono", monospace; color: #00f; }
.mi b { width: 10px; height: 12px; text-align: left; }
.mi.two { padding-left: 0; }
.mi.two b { width: 13px; }
.mi:nth-child(8) { padding-left: 4px; }
.open, .row.on { background: #3399ff; color: #fff; }
.open b, .row.on b { color: #fff; }
.menu { position: absolute; z-index: 5; left: 0; top: 19px; width: 175px; padding: 2px; border: 1px solid #999; background: #f0f0f0; }
.menu.sub { left: 166px; top: -3px; width: 157px; }
.head { height: 16px; padding: 1px 0 0 25px; line-height: 15px; color: #00f; }
.row { display: flex; align-items: center; width: 168px; height: 16px; padding-top: 1px; line-height: 15px; text-align: left; white-space: nowrap; }
.row b { width: 20px; height: 12px; margin-right: 5px; text-align: right; }
.sub .row { width: 151px; }
.teal { color: #007c8c; }
.more { margin-left: auto; margin-right: 4px; border: 4px solid transparent; border-left-color: currentColor; border-right: 0; }

/* tool bars */
.toolbars { flex: none; padding-top: 2px; }
.bar { display: flex; align-items: center; height: 26px; }
.t { display: flex; align-items: center; justify-content: center; flex: none; width: 25px; height: 22px; }
.t svg { width: 16px; height: 16px; fill: none; }
.t.narrow { width: 15px; }
.red { color: #d82020; }
.green { color: #35c24a; }
.amber { color: #f0a020; }
.blue { color: #1c7ad0; }
.sep { flex: none; width: 8px; height: 24px; background: linear-gradient(#999, #999) 4px 0 / 1px 100% no-repeat; }
.grip { flex: none; width: 8px; height: 16px; background: radial-gradient(circle, #999 1px, transparent 1px) 3px 0 / 3px 3px repeat; background-clip: content-box; padding: 0 1px 0 4px; }
.gap1 { width: 158px; }
.gap2 { width: 323px; }
.gap3 { width: 166px; }
.tri { border: 4px solid transparent; border-top-color: #000; border-bottom: 0; }
.combo { display: flex; flex: none; height: 21px; padding: 1px; background: #fff; border: 1px solid #999; border-right-color: #fff; border-bottom-color: #fff; }
.combo select { flex: 1; min-width: 0; appearance: none; padding-left: 3px; }
.arrow { display: flex; align-items: center; justify-content: center; width: 16px; height: 17px; background: #f0f0f0; border: 1px solid #e0e0e0; border-right-color: #666; border-bottom-color: #666; }
.w120 { width: 120px; }
.w160 { width: 160px; }
.w200 { width: 200px; }
.t .glyph { font-family: "Liberation Serif", serif; font-size: 19px; fill: #111; stroke: #111; stroke-width: .4px; }
.t .small { font-size: 14px; }
.t .note { font-size: 16px; fill: #1414c8; stroke: #1414c8; }
.gl { font: 8px "DejaVu Sans", sans-serif; fill: #000; }
.t svg { overflow: visible; }

/* work area */
.work { display: flex; flex: 1; min-height: 0; }
.left { display: flex; flex-direction: column; flex: none; width: 199px; margin-right: 2px; }
.treeframe { flex: 1; display: flex; padding: 4px; padding-bottom: 5px; border: 2px solid #999; border-right-width: 1px; border-bottom-width: 1px; }
.tree { flex: 1; padding: 1px 0 0 21px; background: #fff; border: 1px solid #999; border-right: 0; border-bottom: 0; }
.tree li { position: relative; }
.tree ul { padding-left: 19px; }
.tree a { display: block; width: max-content; height: 16px; padding: 0 2px; margin-left: -2px; }
.tree .sel { background: #f0f0f0; }
.tree li::before { content: ""; position: absolute; left: -12px; top: 0; bottom: 0; border-left: 1px dotted #777; }
.tree li::after { content: ""; position: absolute; left: -12px; top: 8px; width: 9px; border-top: 1px dotted #777; }
.tree > li:first-child::before { top: 8px; }
.tree li:last-child::before { bottom: auto; height: 8px; }
.tog { position: absolute; z-index: 1; left: -16px; top: 4px; width: 9px; height: 9px; border: 1px solid #666; background: linear-gradient(#000, #000) center / 5px 1px no-repeat #fff; }
.preview { flex: none; margin-top: 1px; height: 200px; border: 1px solid #999; border-width: 1px 0 0 1px; background: #fff; }
.preview svg { display: block; width: 198px; height: 198px; shape-rendering: crispEdges; }
.nums { font-size: 9px; fill: #f00; text-anchor: middle; }
.canvas { flex: 1; background: #fff; border-left: 2px solid #888; border-top: 2px solid #888; }
.right { display: flex; flex-direction: column; flex: none; width: 124px; border-left: 1px solid #fff; }
.right div { flex: 1; border: 1px solid #999; border-left-width: 2px; }
.right .upper { flex: none; height: 324px; border-top-width: 2px; box-shadow: 0 1px #fff; }
.right .lower { border-top: 0; margin-top: 1px; margin-bottom: 1px; }

/* messages and status */
.messages { flex: none; height: 38px; padding: 1px 11px; background: #fff; border: 1px solid #999; border-width: 1px 0 0 1px; color: #808080; }
.status { display: flex; gap: 3px; flex: none; height: 20px; padding-top: 2px; }
.status span { height: 18px; padding: 2px 4px 0; border: 1px solid #999; border-width: 1px 0 0 1px; box-shadow: 1px 0 #fff; line-height: 16px; white-space: nowrap; }
.status .c0 { flex: 1; }
.c1 { width: 77px; }
.c2 { width: 17px; }
.c3 { width: 27px; }
.c4 { width: 127px; }
.c5 { width: 137px; }

/* dialog */
.dialog { position: absolute; z-index: 6; left: 675px; top: 320px; width: 662px; border: 1px solid #444; border-radius: 6px 6px 0 0; background: #f0f0f0; box-shadow: inset 0 0 0 2px #d8e4f0; }
.dtitle { display: flex; align-items: center; gap: 2px; height: 24px; padding: 1px 4px 0 6px; border-radius: 5px 5px 0 0; background: linear-gradient(#b9c8d9, #d8e4f0); }
h2 { flex: 1; font: 12px/22px "Noto Sans", sans-serif; color: #555; }
.dbody { padding: 8px 8px 9px 11px; }
.group { border: 1px solid #999; box-shadow: 1px 1px #fff, inset 1px 1px #fff; }
.group label { text-align: right; }
.name { display: grid; grid-template-columns: 111px 462px auto; align-items: center; gap: 2px; height: 29px; margin-bottom: 6px; }
.name label { padding-right: 4px; }
.acts { display: flex; gap: 3px; padding-left: 2px; }
.grid { display: grid; grid-template-columns: 108px 140px 140px 114px 114px; column-gap: 5px; row-gap: 3px; padding: 6px 0 7px; }
.grid > span { line-height: 16px; }
.grid label { line-height: 17px; margin-right: -2px; }
.field { display: flex; align-items: center; height: 18px; padding-right: 1px; border: 1px solid #999; background: #fff; }
.field input { flex: 1; min-width: 0; padding-left: 5px; height: 16px; }
.num { width: 114px; height: 18px; padding-left: 5px; border: 1px solid #999; background: #fff; }
.num[readonly] { background: #f0f0f0; }
.ib { flex: none; width: 16px; height: 16px; }
.ib svg, .drop svg { display: block; width: 16px; height: 16px; }
.drop { width: 16px; height: 14px; border-left: 1px solid #777; }
.drop svg { width: 14px; height: 14px; }
.done { display: block; width: 86px; height: 21px; margin: 12px 0 0 8px; border: 1px solid #707070; border-radius: 2px; background: linear-gradient(#f2f2f2 48%, #dcdcdc 52%, #cfcfcf); box-shadow: inset 0 0 0 1px #fafafa; }
.pointer { position: absolute; z-index: 7; left: 615px; top: 77px; width: 370px; height: 240px; pointer-events: none; }
```
